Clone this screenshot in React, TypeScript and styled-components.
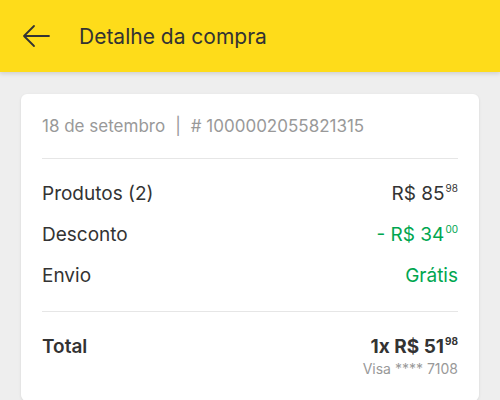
import React from 'react';
import styled, { createGlobalStyle } from 'styled-components';

const GlobalStyle = createGlobalStyle`
  html, body {
    margin: 0;
    padding: 0;
    background: #eeeeee;
    font-family: Inter, "Open Sans", Arial, sans-serif;
    -webkit-font-smoothing: antialiased;
  }
`;

const Page = styled.div`
  width: 500px;
  height: 400px;
  overflow: hidden;
  background: #eeeeee;
`;

const Header = styled.header`
  height: 72px;
  background: #fedc1a;
  display: flex;
  align-items: center;
  padding-left: 22px;
  gap: 29px;
  box-shadow: 0 2px 4px rgba(0, 0, 0, 0.12);
  position: relative;
`;

const BackButton = styled.button`
  border: 0;
  background: none;
  padding: 0;
  display: flex;
  cursor: pointer;
`;

const Title = styled.h1`
  margin: 0;
  font-size: 21px;
  font-weight: 400;
  color: #333;
`;

const Content = styled.main`
  padding: 22px 21px 0;
`;

const Card = styled.section`
  background: #fff;
  border-radius: 6px;
  box-shadow: 0 1px 3px rgba(0, 0, 0, 0.1);
  padding: 0 21px 24px;
`;

const Meta = styled.div`
  display: flex;
  align-items: center;
  gap: 10px;
  height: 64px;
  font-size: 17px;
  color: #999;
  border-bottom: 1px solid #e6e6e6;
`;

const Summary = styled.div`
  display: flex;
  flex-direction: column;
  gap: 13px;
  padding: 21px 0 21px;
  border-bottom: 1px solid #e6e6e6;
`;

const Row = styled.div`
  display: flex;
  justify-content: space-between;
  align-items: flex-start;
  font-size: 19px;
  line-height: 28px;
  color: #333;
`;

const Value = styled.span<{ $green?: boolean }>`
  color: ${p => (p.$green ? '#00a650' : '#333')};
`;

const Cents = styled.sup`
  font-size: 10px;
  vertical-align: 8px;
  line-height: 0;
  margin-left: 1px;
`;

const TotalRow = styled(Row)`
  padding-top: 21px;
  font-weight: 600;
`;

const TotalRight = styled.div`
  display: flex;
  flex-direction: column;
  align-items: flex-end;
  font-weight: 700;
`;

const Payment = styled.span`
  font-size: 14px;
  line-height: 16px;
  font-weight: 400;
  color: #999;
`;

const Price = ({ value, cents, green, prefix = '' }: { value: string; cents: string; green?: boolean; prefix?: string }) => (
  <Value $green={green}>
    {prefix}R$ {value}
    <Cents>{cents}</Cents>
  </Value>
);

export default function App() {
  return (
    <Page>
      <GlobalStyle />
      <Header>
        <BackButton aria-label="Voltar">
          <svg width="28" height="24" viewBox="0 0 28 24" fill="none" stroke="#333" strokeWidth="1.8" strokeLinecap="round" strokeLinejoin="round">
            <path d="M27 12H2M12 2L2 12l10 10" />
          </svg>
        </BackButton>
        <Title>Detalhe da compra</Title>
      </Header>
      <Content>
        <Card>
          <Meta>
            <span>18 de setembro</span>
            <span>|</span>
            <span># 1000002055821315</span>
          </Meta>
          <Summary>
            <Row>
              <span>Produtos (2)</span>
              <Price value="85" cents="98" />
            </Row>
            <Row>
              <span>Desconto</span>
              <Price value="34" cents="00" green prefix="- " />
            </Row>
            <Row>
              <span>Envio</span>
              <Value $green>Grátis</Value>
            </Row>
          </Summary>
          <TotalRow>
            <span>Total</span>
            <TotalRight>
              <Value>
                1x R$ 51<Cents>98</Cents>
              </Value>
              <Payment>Visa **** 7108</Payment>
            </TotalRight>
          </TotalRow>
        </Card>
      </Content>
    </Page>
  );
}
